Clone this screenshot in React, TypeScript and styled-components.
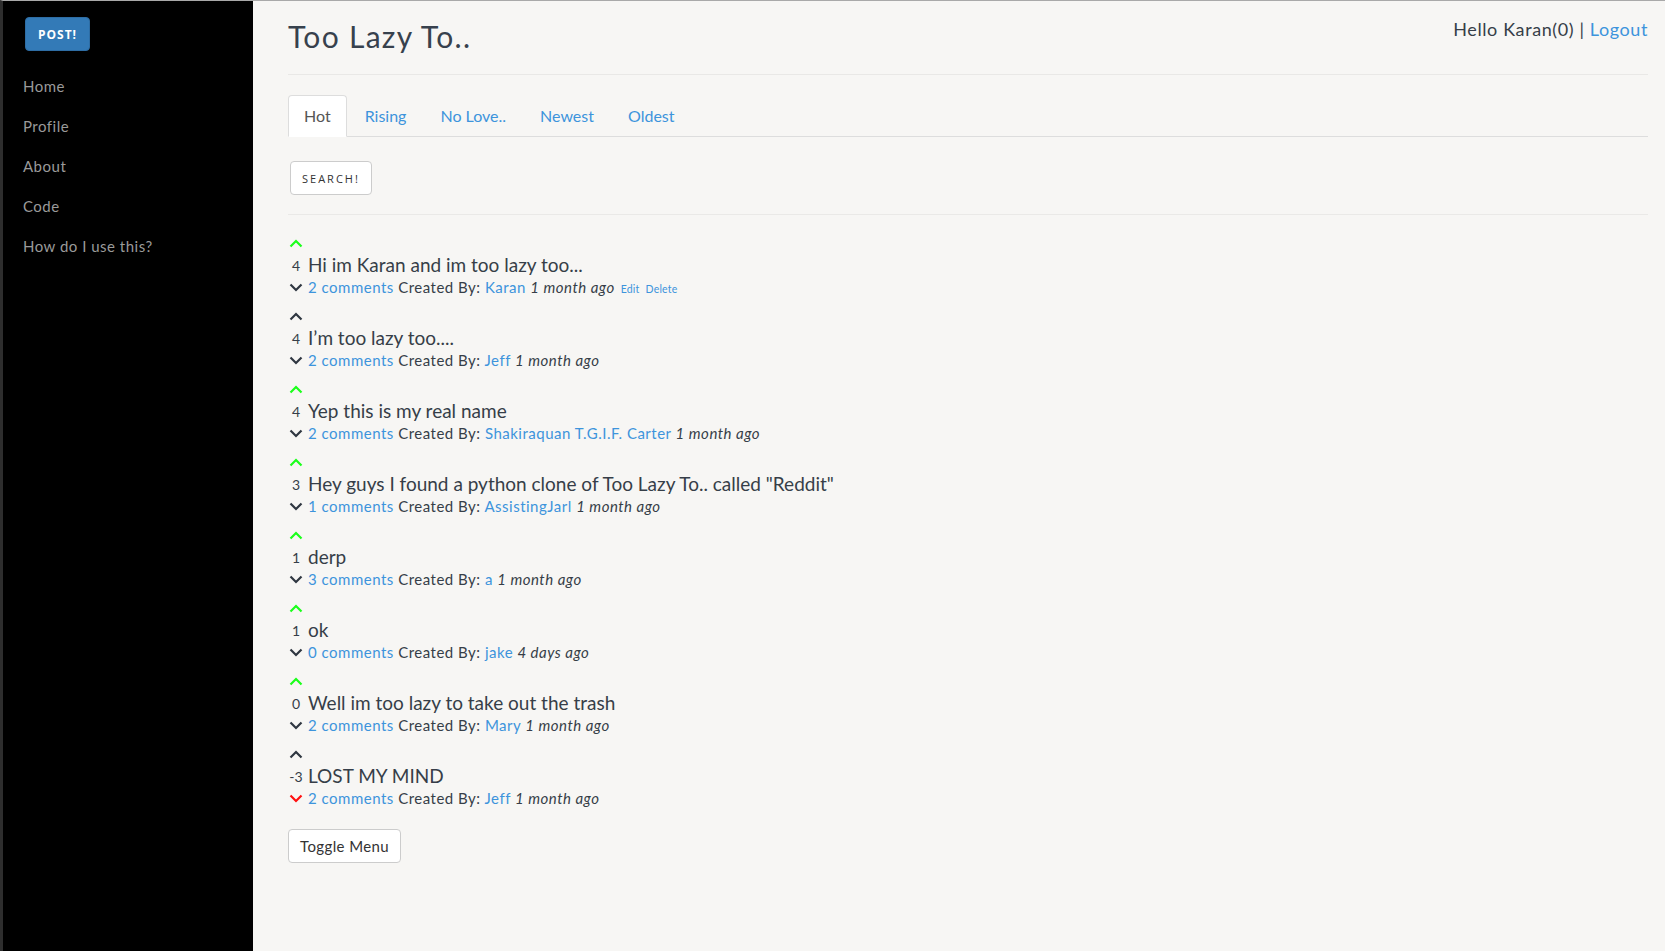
import React from 'react';
import styled, {createGlobalStyle} from 'styled-components';

const GlobalStyle = createGlobalStyle`
  html, body {
    margin: 0;
    padding: 0;
    height: 100%;
  }
  body {
    font-family: Lato, "Noto Sans", sans-serif;
    color: #363e48;
    background: #f7f6f4;
  }
  a {
    color: #3d94dc;
    text-decoration: none;
  }
`;

const Wrapper = styled.div`
  display: flex;
  min-height: 950px;
  border-top: 1px solid #a9a9a9;
  border-left: 3px solid #2e2e2e;
`;

const Sidebar = styled.nav`
  width: 250px;
  flex-shrink: 0;
  background: #000;
  padding-top: 16px;
`;

const PostButton = styled.button`
  display: block;
  margin-left: 22px;
  width: 65px;
  height: 34px;
  background: #337ab7;
  border: 1px solid #2e6da4;
  border-radius: 4px;
  color: #fff;
  font-family: "Open Sans", sans-serif;
  font-weight: 700;
  font-size: 12px;
  letter-spacing: 1px;
  padding: 0;
`;

const NavList = styled.ul`
  list-style: none;
  margin: 15px 0 0;
  padding: 0;
  > li {
    line-height: 40px;
    padding-left: 20px;
    font-size: 15px;
    letter-spacing: 0.5px;
    a { color: #9a9a9a; }
  }
`;

const Main = styled.main`
  flex: 1;
  padding: 0 17px 0 35px;
`;

const Header = styled.header`
  display: flex;
  justify-content: space-between;
  align-items: flex-start;
  height: 73px;
  border-bottom: 1px solid #e9e8e6;
`;

const Title = styled.h1`
  margin: 17px 0 0;
  font-size: 30px;
  font-weight: 400;
  letter-spacing: 1.3px;
  color: #37414d;
`;

const UserBox = styled.div`
  margin-top: 17px;
  font-size: 18px;
  letter-spacing: 0.6px;
`;

const Tabs = styled.ul`
  list-style: none;
  display: flex;
  margin: 20px 0 0;
  padding: 0;
  border-bottom: 1px solid #ddd;
`;

const Tab = styled.li<{$active?: boolean}>`
  margin-right: 2px;
  margin-bottom: -1px;
  > a {
    display: block;
    padding: 0 15px;
    line-height: 40px;
    font-size: 16px;
    border: 1px solid ${p => (p.$active ? '#ddd' : 'transparent')};
    border-bottom-color: ${p => (p.$active ? '#fff' : 'transparent')};
    border-radius: 4px 4px 0 0;
    background: ${p => (p.$active ? '#fff' : 'transparent')};
    color: ${p => (p.$active ? '#555' : '#3d94dc')};
  }
`;

const SearchButton = styled.button`
  margin: 24px 0 0 2px;
  height: 34px;
  padding: 0 11px;
  background: #fff;
  border: 1px solid #ccc;
  border-radius: 4px;
  font-family: "Open Sans", sans-serif;
  font-size: 11px;
  font-weight: 400;
  letter-spacing: 2px;
  color: #333;
`;

const Divider = styled.hr`
  border: 0;
  border-top: 1px solid #eae9e7;
  margin: 19px 0 20px;
`;

const PostItem = styled.div`
  margin-bottom: 11px;
`;

const Row = styled.div<{$h: number}>`
  display: flex;
  align-items: center;
  height: ${p => p.$h}px;
`;

const VoteCol = styled.div`
  width: 16px;
  display: flex;
  justify-content: center;
  margin-right: 4px;
  flex-shrink: 0;
`;

const Score = styled.span`
  font-size: 14px;
  align-self: flex-end;
  margin-bottom: -2px;
`;

const PostTitle = styled.span`
  font-size: 19px;
`;

const Meta = styled.div`
  font-size: 15px;
  letter-spacing: 0.5px;
  white-space: nowrap;
  em { font-style: italic; }
`;

const SmallLink = styled.a`
  font-size: 10.5px;
  letter-spacing: 0.2px;
  margin-left: 6px;
  &:first-of-type { margin-left: 3px; }
`;

const ToggleButton = styled.button`
  margin-top: 10px;
  height: 34px;
  padding: 0 11px;
  background: #fff;
  border: 1px solid #ccc;
  border-radius: 4px;
  font-family: Lato, sans-serif;
  font-size: 15px;
  letter-spacing: 0.4px;
  color: #333;
`;

const Chevron: React.FC<{up?: boolean; color: string}> = ({up, color}) => (
  <svg width="14" height="9" viewBox="0 0 14 9">
    <path
      d={up ? 'M1.5 7.5 L7 2 L12.5 7.5' : 'M1.5 1.5 L7 7 L12.5 1.5'}
      fill="none"
      stroke={color}
      strokeWidth="2.2"
    />
  </svg>
);

type Post = {
  score: number;
  title: string;
  comments: number;
  author: string;
  when: string;
  vote: 1 | 0 | -1;
  own?: boolean;
};

const posts: Post[] = [
  {score: 4, title: 'Hi im Karan and im too lazy too...', comments: 2, author: 'Karan', when: '1 month ago', vote: 1, own: true},
  {score: 4, title: 'I\u2019m too lazy too....', comments: 2, author: 'Jeff', when: '1 month ago', vote: 0},
  {score: 4, title: 'Yep this is my real name', comments: 2, author: 'Shakiraquan T.G.I.F. Carter', when: '1 month ago', vote: 1},
  {score: 3, title: 'Hey guys I found a python clone of Too Lazy To.. called "Reddit"', comments: 1, author: 'AssistingJarl', when: '1 month ago', vote: 1},
  {score: 1, title: 'derp', comments: 3, author: 'a', when: '1 month ago', vote: 1},
  {score: 1, title: 'ok', comments: 0, author: 'jake', when: '4 days ago', vote: 1},
  {score: 0, title: 'Well im too lazy to take out the trash', comments: 2, author: 'Mary', when: '1 month ago', vote: 1},
  {score: -3, title: 'LOST MY MIND', comments: 2, author: 'Jeff', when: '1 month ago', vote: -1},
];

const DARK = '#2f3741';

const PostRow: React.FC<{post: Post}> = ({post}) => (
  <PostItem>
    <Row $h={16}>
      <VoteCol>
        <Chevron up color={post.vote === 1 ? '#1bff1b' : DARK} />
      </VoteCol>
    </Row>
    <Row $h={26}>
      <VoteCol>
        <Score>{post.score}</Score>
      </VoteCol>
      <PostTitle>{post.title}</PostTitle>
    </Row>
    <Row $h={20}>
      <VoteCol>
        <Chevron color={post.vote === -1 ? '#ff1010' : DARK} />
      </VoteCol>
      <Meta>
        <a href="#">{post.comments} comments</a> Created By: <a href="#">{post.author}</a>{' '}
        <em>{post.when}</em>
        {post.own && (
          <>
            <SmallLink href="#">Edit</SmallLink>
            <SmallLink href="#">Delete</SmallLink>
          </>
        )}
      </Meta>
    </Row>
  </PostItem>
);

export default function App() {
  return (
    <>
      <GlobalStyle />
      <Wrapper>
        <Sidebar>
          <PostButton>POST!</PostButton>
          <NavList>
            <li><a href="#">Home</a></li>
            <li><a href="#">Profile</a></li>
            <li><a href="#">About</a></li>
            <li><a href="#">Code</a></li>
            <li><a href="#">How do I use this?</a></li>
          </NavList>
        </Sidebar>
        <Main>
          <Header>
            <Title>Too Lazy To..</Title>
            <UserBox>
              Hello Karan(0) | <a href="#">Logout</a>
            </UserBox>
          </Header>
          <Tabs>
            <Tab $active><a href="#">Hot</a></Tab>
            <Tab><a href="#">Rising</a></Tab>
            <Tab><a href="#">No Love..</a></Tab>
            <Tab><a href="#">Newest</a></Tab>
            <Tab><a href="#">Oldest</a></Tab>
          </Tabs>
          <SearchButton>SEARCH!</SearchButton>
          <Divider />
          {posts.map((p, i) => (
            <PostRow key={i} post={p} />
          ))}
          <ToggleButton>Toggle Menu</ToggleButton>
        </Main>
      </Wrapper>
    </>
  );
}
